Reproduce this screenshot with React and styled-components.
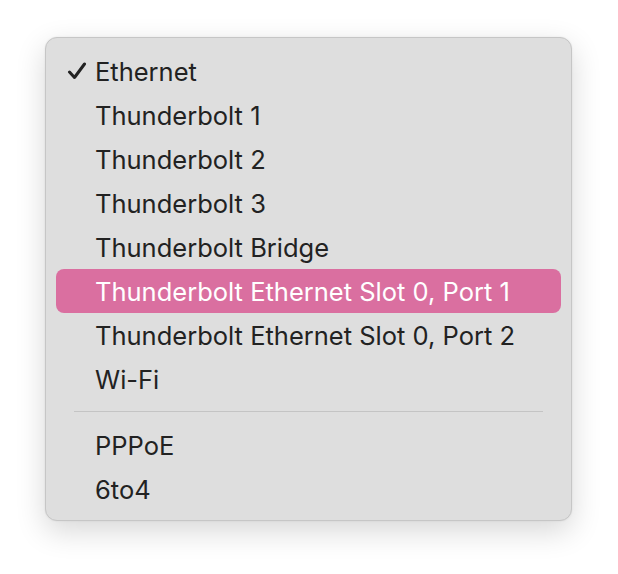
import React from "react"
import styled, { createGlobalStyle } from "styled-components"

const Global = createGlobalStyle`
  html, body {
    margin: 0;
    background: #ffffff;
  }
  body {
    font-family: Inter, "Noto Sans", sans-serif;
  }
`

const Page = styled.div`
  width: 618px;
  height: 574px;
  padding: 37px 0 0 45px;
  box-sizing: border-box;
`

const Menu = styled.div`
  width: 527px;
  box-sizing: border-box;
  padding: 11px 10px 9px 10px;
  background: #dedede;
  border: 1px solid #c6c6c6;
  border-radius: 12px;
  box-shadow: 0 10px 30px rgba(0, 0, 0, 0.16), 0 0 2px rgba(0, 0, 0, 0.08);
`

const Item = styled.div`
  height: 44px;
  display: flex;
  align-items: center;
  padding-left: 11px;
  border-radius: 8px;
  font-size: 25.5px;
  color: ${(p) => (p.$active ? "#ffffff" : "#222222")};
  background: ${(p) => (p.$active ? "#da6fa0" : "transparent")};
`

const Check = styled.span`
  width: 28px;
  display: flex;
  align-items: center;
`

const Separator = styled.div`
  height: 1px;
  background: #c4c4c4;
  margin: 10px 18px 11px 18px;
`

const CheckMark = () => (
  <svg width="20" height="18" viewBox="0 0 20 18">
    <path d="M2.5 10 L7.5 15.5 L17.5 2" fill="none" stroke="#222" strokeWidth="3" strokeLinecap="round" strokeLinejoin="round" />
  </svg>
)

const top = [
  "Ethernet",
  "Thunderbolt 1",
  "Thunderbolt 2",
  "Thunderbolt 3",
  "Thunderbolt Bridge",
  "Thunderbolt Ethernet Slot 0, Port 1",
  "Thunderbolt Ethernet Slot 0, Port 2",
  "Wi-Fi",
]

const bottom = ["PPPoE", "6to4"]

export default function App() {
  return (
    <Page>
      <Global />
      <Menu>
        {top.map((label, i) => (
          <Item key={label} $active={i === 5}>
            <Check>{i === 0 && <CheckMark />}</Check>
            {label}
          </Item>
        ))}
        <Separator />
        {bottom.map((label) => (
          <Item key={label}>
            <Check />
            {label}
          </Item>
        ))}
      </Menu>
    </Page>
  )
}
